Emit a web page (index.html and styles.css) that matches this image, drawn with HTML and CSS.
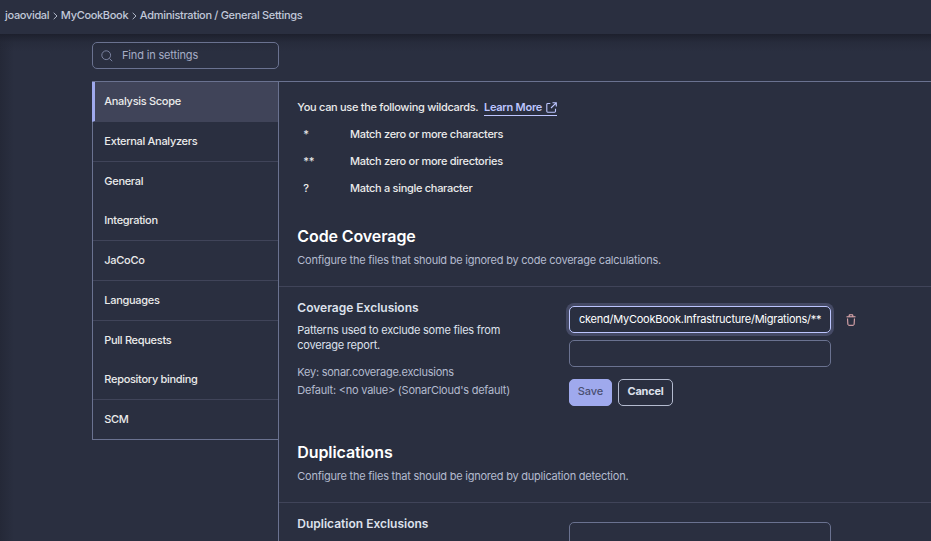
FILE: index.html
```html
<!DOCTYPE html>
<html lang="en">
<head>
<meta charset="utf-8">
<title>General Settings</title>
<link rel="stylesheet" href="styles.css">
</head>
<body>
<header class="topbar">
  <nav class="crumbs">
    <span>joaovidal</span>
    <svg class="chevron" viewBox="0 0 5 8"><path d="M.7.8 4 4 .7 7.2"/></svg>
    <span>MyCookBook</span>
    <svg class="chevron" viewBox="0 0 5 8"><path d="M.7.8 4 4 .7 7.2"/></svg>
    <span>Administration / General Settings</span>
  </nav>
</header>
<div class="page">
  <div class="search">
    <svg class="search-icon" viewBox="0 0 12 12"><circle cx="5.2" cy="5.2" r="4.4"/><path d="m8.4 8.4 2.8 2.8"/></svg>
    <span>Find in settings</span>
  </div>
  <div class="columns">
    <aside class="sidebar">
      <ul class="menu">
        <li class="active">Analysis Scope</li>
        <li>External Analyzers</li>
        <li class="plain">General</li>
        <li>Integration</li>
        <li>JaCoCo</li>
        <li>Languages</li>
        <li class="plain">Pull Requests</li>
        <li>Repository binding</li>
        <li>SCM</li>
      </ul>
    </aside>
    <main class="content">
      <section class="intro">
        <p>You can use the following wildcards. <a class="link">Learn More <svg class="external" viewBox="0 0 11 11"><path d="M4.3 1.5H1.7Q.8 1.5.8 2.4v6.9q0 .9.9.9h6.9q.9 0 .9-.9V6.7M6.5.7h3.8v3.8M10.2.8 5 6"/></svg></a></p>
        <dl class="wildcards">
          <dt>*</dt><dd>Match zero or more characters</dd>
          <dt>**</dt><dd>Match zero or more directories</dd>
          <dt>?</dt><dd>Match a single character</dd>
        </dl>
      </section>
      <section class="group">
        <h2>Code Coverage</h2>
        <p class="lead">Configure the files that should be ignored by code coverage calculations.</p>
        <div class="setting">
          <div class="info">
            <h3>Coverage Exclusions</h3>
            <p class="desc">Patterns used to exclude some files from<br>coverage report.</p>
            <p class="meta">Key: sonar.coverage.exclusions</p>
            <p class="meta">Default: &lt;no value&gt; (SonarCloud's default)</p>
          </div>
          <div class="form">
            <div class="row">
              <div class="field focused"><span>ckend/MyCookBook.Infrastructure/Migrations/**</span></div>
              <svg class="trash" viewBox="0 0 10 12"><path d="M.5 2.8h9M3.2 2.6V.8h3.6v1.8M1.6 4.5l.3 5.9q.1.9 1 .9h4.2q.9 0 1-.9l.3-5.9"/></svg>
            </div>
            <div class="field"></div>
            <div class="actions">
              <button class="btn save">Save</button>
              <button class="btn cancel">Cancel</button>
            </div>
          </div>
        </div>
      </section>
      <section class="group">
        <h2>Duplications</h2>
        <p class="lead">Configure the files that should be ignored by duplication detection.</p>
        <div class="setting">
          <div class="info"><h3>Duplication Exclusions</h3></div>
          <div class="form"><div class="field"></div></div>
        </div>
      </section>
    </main>
  </div>
</div>
</body>
</html>
```
FILE: styles.css
```css
* { box-sizing: border-box; margin: 0; padding: 0; }
body {
  height: 541px;
  overflow: hidden;
  background: #2a2f40;
  color: #ebebeb;
  font: 500 11px/16px Inter, "Liberation Sans", sans-serif;
  letter-spacing: -.3px;
}
svg { fill: none; stroke: currentColor; flex: none; }
.topbar { height: 34px; background: #2a2f40; }
.crumbs {
  display: flex;
  align-items: center;
  height: 30px;
  padding-left: 5px;
  color: #c1c8d9;
  letter-spacing: -.32px;
}
.chevron { width: 5px; height: 8px; margin: 1px 3.3px 0; stroke-width: .9; }
.page {
  height: 507px;
  overflow: hidden;
  padding: 8px 0 0 92px;
  background:
    linear-gradient(#1d202d, rgba(35, 39, 54, .5) 8px, transparent 17px),
    linear-gradient(90deg, rgba(31, 34, 47, .5), transparent 14px);
}
.search {
  display: flex;
  align-items: center;
  width: 187px;
  height: 27px;
  padding-left: 8px;
  border: 1px solid #6a7290;
  border-radius: 5px;
  color: #a6adc6;
  font-weight: 400;
  letter-spacing: -.16px;
}
.search span { padding-bottom: 2px; }
.search-icon { width: 12px; height: 12px; margin: 1px 9px 0 0; color: #7a82a0; }
.columns { display: flex; height: 460px; margin-top: 12px; border-top: 1px solid #6a7290; }
.sidebar { width: 187px; border-right: 1px solid #6a7290; }
.menu {
  list-style: none;
  border-left: 1px solid #6a7290;
  border-bottom: 1px solid #6a7290;
}
.menu li { height: 40px; padding-left: 11.3px; border-bottom: 1px solid #404459; line-height: 38px; }
.menu .plain { height: 39px; border-bottom: 0; }
.menu li:last-child { height: 39px; border-bottom: 0; }
.menu .active {
  margin-left: -1px;
  padding-left: 9.3px;
  border-left: 3px solid #9fa9ed;
  background: #404459;
}
.content { flex: 1; }
.intro { height: 142px; padding: 17px 0 0 18.3px; }
.link {
  display: inline-flex;
  align-items: center;
  gap: 4px;
  height: 16px;
  margin-left: 3px;
  border-bottom: 1px solid #bdc6ff;
  color: #bdc6ff;
  font-weight: 600;
  letter-spacing: -.25px;
}
.external { width: 11px; height: 11px; margin-top: 1px; stroke-width: 1.1; }
.wildcards {
  display: grid;
  grid-template-columns: 46.7px auto;
  grid-auto-rows: 27px;
  margin-top: 5px;
  padding-left: 6px;
  line-height: 27px;
}
.group { height: 216px; }
h2 {
  height: 24px;
  padding-left: 18.3px;
  color: #fff;
  font-size: 16px;
  font-weight: 600;
  line-height: 24px;
  letter-spacing: -.1px;
}
.lead {
  height: 39px;
  padding: 4px 0 0 18.3px;
  border-bottom: 1px solid #404459;
  color: #b4bbcf;
  font-weight: 400;
  letter-spacing: -.23px;
}
.setting { display: flex; padding-left: 18px; }
.info { width: 272px; padding: 12px 0 0 .3px; }
h3 { color: #dde1ec; font-size: 12px; font-weight: 600; line-height: 18px; letter-spacing: 0; }
.desc { margin: 6px 0 10px; color: #dde1ec; font-weight: 400; line-height: 15px; letter-spacing: -.23px; }
.meta { color: #b4bbcf; font-weight: 400; line-height: 18px; letter-spacing: -.24px; }
.form { padding-top: 19px; }
.row { display: flex; align-items: center; margin-bottom: 7px; }
.field {
  width: 262px;
  height: 27px;
  border: 1px solid #6a7290;
  border-radius: 5px;
}
.focused {
  padding-left: 9px;
  border-color: #bdc6ff;
  box-shadow: 0 0 0 3px #454a65;
  color: #fff;
  font-weight: 400;
  line-height: 24px;
  letter-spacing: -.24px;
}
.trash { width: 10px; height: 12px; margin-left: 15px; color: #f0b4b8; stroke-width: 1; }
.actions { display: flex; gap: 6px; margin-top: 12px; }
.btn {
  height: 27px;
  padding-bottom: 2px;
  border: 1px solid #9fa9ed;
  border-radius: 5px;
  font: 700 11px/23px Inter, sans-serif;
  letter-spacing: -.25px;
}
.save { width: 43px; background: #9fa9ed; color: #4a4f70; font-weight: 500; letter-spacing: -.1px; }
.cancel { width: 55px; border-color: #b4bbcf; background: transparent; color: #dde1ec; }
```
